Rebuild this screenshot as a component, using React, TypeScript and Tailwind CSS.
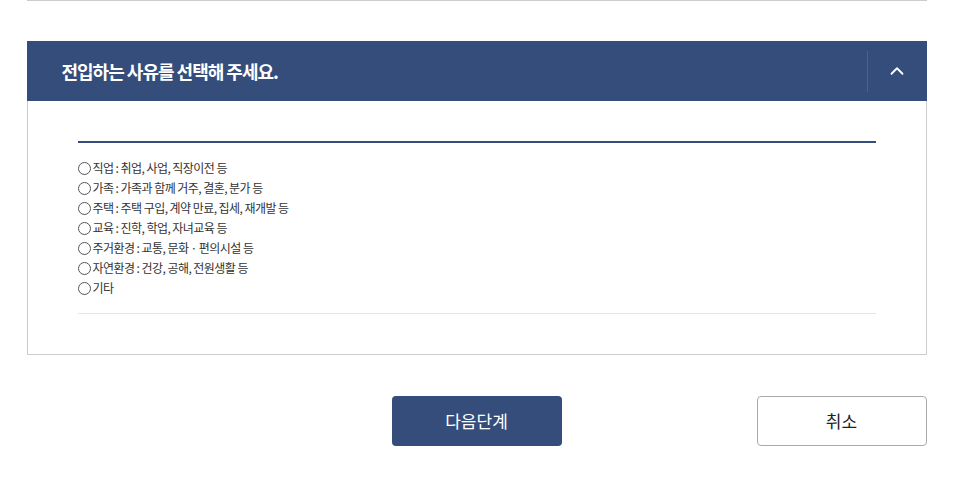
import { ChevronUp } from 'lucide-react';

const reasons = [
  '직업 : 취업, 사업, 직장이전 등',
  '가족 : 가족과 함께 거주, 결혼, 분가 등',
  '주택 : 주택 구입, 계약 만료, 집세, 재개발 등',
  '교육 : 진학, 학업, 자녀교육 등',
  '주거환경 : 교통, 문화 · 편의시설 등',
  '자연환경 : 건강, 공해, 전원생활 등',
  '기타',
];

const App = () => {
  return (
    <div
      className="min-h-screen bg-white"
      style={{ fontFamily: '"Noto Sans CJK KR", "Noto Sans", sans-serif' }}
    >
      <div className="mx-auto w-[900px]">
        <div className="h-px bg-[#cccccc]" />

        {/* Accordion */}
        <div className="mt-[40px]">
          <div className="flex h-[60px] items-center bg-[#344d7a]">
            <h2 className="flex-1 pl-[35px] text-[18px] font-bold tracking-[-1px] text-white">
              전입하는 사유를 선택해 주세요.
            </h2>
            <div className="h-[41px] w-px bg-[#4a628c]" />
            <button className="flex w-[59px] items-center justify-center text-white">
              <ChevronUp size={22} strokeWidth={2} />
            </button>
          </div>

          <div className="border border-t-0 border-[#cccccc] px-[50px] pt-[40px] pb-[40px]">
            <div className="h-[2px] bg-[#344d7a]" />
            <ul className="pt-[15px]">
              {reasons.map((r) => (
                <li key={r} className="flex h-[20px] items-center text-[12px] tracking-[-0.55px] text-[#333333]">
                  <span className="mr-[2px] inline-block h-[13px] w-[13px] rounded-full border border-[#555555]" />
                  {r}
                </li>
              ))}
            </ul>
            <div className="mt-[15px] h-px bg-[#e6e6e6]" />
          </div>
        </div>

        {/* Buttons */}
        <div className="mt-[41px] grid grid-cols-[1fr_170px_1fr]">
          <div />
          <button className="h-[50px] rounded-[4px] bg-[#344d7a] text-[17px] text-white">
            다음단계
          </button>
          <div className="flex justify-end">
            <button className="h-[50px] w-[170px] rounded-[4px] border border-[#aaaaaa] bg-white text-[17px] text-[#222222]">
              취소
            </button>
          </div>
        </div>
      </div>
    </div>
  );
};

export default App;
